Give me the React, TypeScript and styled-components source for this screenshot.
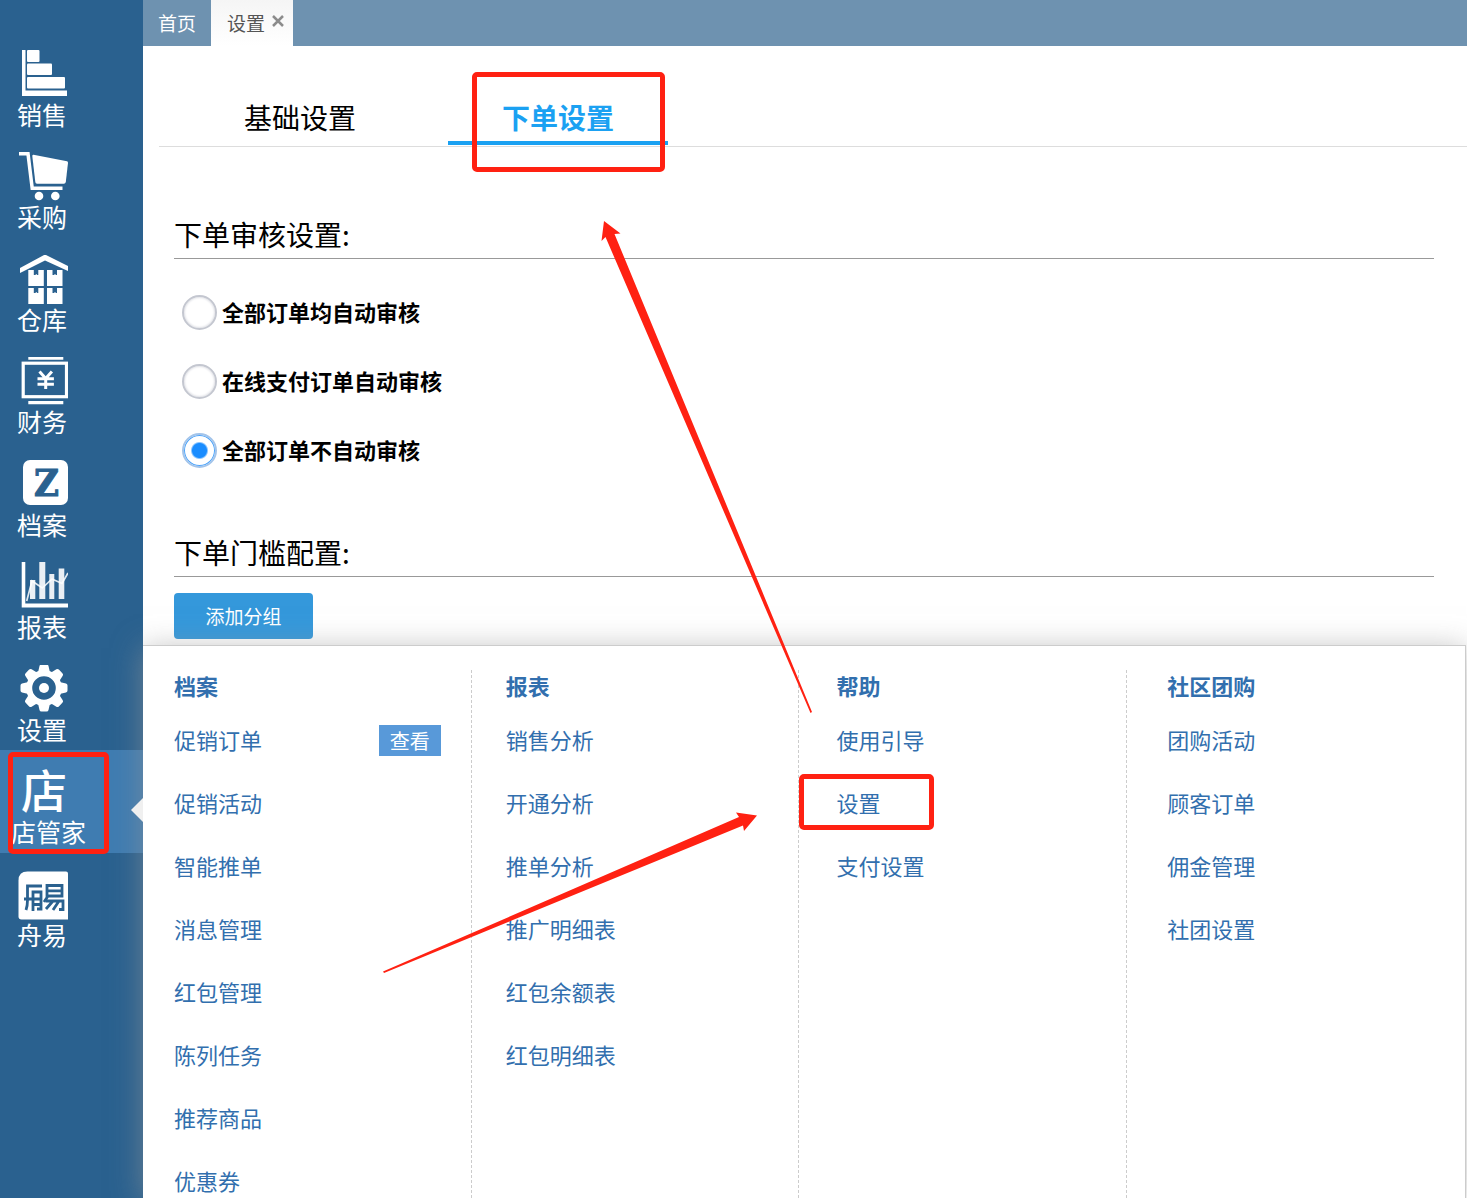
import React, { useState } from "react";
import styled, { createGlobalStyle, css } from "styled-components";

const RED = "#ff2112";

const GlobalStyle = createGlobalStyle`
  *, *::before, *::after { box-sizing: border-box; }
  body {
    margin: 0;
    background: #fff;
    font-family: "Noto Sans CJK SC", "Microsoft YaHei", sans-serif;
    color: #000;
  }
  button, input { font-family: inherit; }
  button { border: 0; padding: 0; background: none; cursor: pointer; }
  ul, h2, h3, fieldset { margin: 0; padding: 0; border: 0; font-weight: 400; }
  ul { list-style: none; }
  a { text-decoration: none; color: inherit; }
`;

const Page = styled.div`
  position: relative;
  display: flex;
  height: 100vh;
  overflow: hidden;
`;

const Sidebar = styled.nav`
  flex: none;
  width: 143px;
  padding-top: 33px;
  background: #2a618f;
`;

const SideList = styled.ul`
  display: grid;
  grid-template-rows: repeat(9, 1fr);
  height: 922px;
`;

const SideItem = styled.li<{ $active?: boolean }>`
  position: relative;
  ${(p) =>
    p.$active &&
    css`
      background: #3f7cb1;
      &::after {
        content: "";
        position: absolute;
        z-index: 2;
        right: 0;
        top: 48px;
        border: 12px solid transparent;
        border-left-width: 0;
        border-right-color: #f0f0f0;
      }
    `}
`;

const SideLink = styled.a<{ $long?: boolean }>`
  display: flex;
  flex-direction: column;
  height: 100%;
  padding: 17px 0 0 ${(p) => (p.$long ? 11 : 17)}px;
  color: #fff;
  font-size: 25px;
  line-height: 28px;
  white-space: nowrap;
`;

const SideIcon = styled.svg<{ $long?: boolean }>`
  display: block;
  flex: none;
  width: 50px;
  height: 50px;
  margin-left: ${(p) => (p.$long ? 7 : 1)}px;
  fill: #fff;
`;

const Main = styled.main`
  flex: 1;
  min-width: 0;
  display: flex;
  flex-direction: column;
`;

const TopBar = styled.header`
  display: flex;
  flex: none;
  height: 46px;
  background: #6e92b0;
`;

const PageTab = styled.div<{ $active?: boolean }>`
  display: flex;
  align-items: center;
  gap: 6px;
  padding: 0 ${(p) => (p.$active ? "8px 0 16px" : "15px")};
  background: ${(p) => (p.$active ? "linear-gradient(#f5f5f5, #fff)" : "transparent")};
  color: ${(p) => (p.$active ? "#555" : "#fff")};
`;

const TabName = styled.button`
  color: inherit;
  font-size: 19px;
  line-height: 46px;
`;

const CloseButton = styled.button`
  display: flex;
  padding-bottom: 4px;
  svg { width: 14px; height: 14px; stroke: #8c8c8c; stroke-width: 2.5; }
`;

const Settings = styled.div`
  flex: none;
  padding: 30px 0 6px 16px;
`;

const SettingTabs = styled.div`
  display: flex;
  gap: 38px;
  padding-left: 31px;
  border-bottom: 1px solid #ddd;
`;

const SettingTab = styled.button<{ $active: boolean }>`
  width: 220px;
  height: 69px;
  padding-top: 16px;
  border-bottom: 4px solid ${(p) => (p.$active ? "#1ba1f2" : "transparent")};
  margin-bottom: 1px;
  color: ${(p) => (p.$active ? "#1ba1f2" : "#000")};
  font-size: 28px;
  font-weight: ${(p) => (p.$active ? 700 : 400)};
  line-height: 40px;
`;

const Section = styled.section`
  padding: 65px 33px 0 15px;
`;

const SectionTitle = styled.h2`
  height: 47px;
  border-bottom: 1px solid #999;
  font-size: 28px;
  line-height: 44px;
`;

const Choices = styled.fieldset`
  display: grid;
  grid-auto-rows: 69px;
  padding: 19px 0 0 8px;
  height: 206px;
`;

const Choice = styled.label`
  display: flex;
  align-items: center;
  gap: 5px;
  font-size: 22px;
  font-weight: 700;
  span { padding-bottom: 4px; }
`;

const Radio = styled.input`
  appearance: none;
  width: 35px;
  height: 35px;
  margin: 0;
  border: 2px solid #c4c7d0;
  border-radius: 50%;
  background: #fff;
  box-shadow: inset 0 0 2px 1px #e2e3e8;
  &:checked {
    border-color: #a3c4ea;
    background: radial-gradient(circle, #1b8dff 7px, #fff 9px);
    box-shadow: inset 0 0 0 1px #4aa3fb;
  }
`;

const PrimaryButton = styled.button`
  display: block;
  width: 139px;
  height: 46px;
  margin-top: 16px;
  padding-bottom: 2px;
  border-radius: 4px;
  background: #3498db;
  color: #fff;
  font-size: 19px;
`;

const MegaMenu = styled.div`
  position: relative;
  z-index: 1;
  flex: 1;
  min-height: 0;
  display: grid;
  grid-template-columns: repeat(3, 655fr) 677fr;
  margin-right: 1px;
  padding-top: 24px;
  border: 1px solid #ccc;
  border-width: 1px 1px 0 0;
  background: #fff;
  box-shadow: 0 3px 28px rgba(150, 150, 150, 0.6);
`;

const MenuColumn = styled.section<{ $inset: number }>`
  padding-left: ${(p) => p.$inset}px;
  color: #326fae;
  & + & { border-left: 1px dashed #ccc; }
`;

const MenuTitle = styled.h3`
  margin-bottom: 9px;
  font-size: 22px;
  font-weight: 700;
  line-height: 30px;
`;

const MenuRow = styled.li`
  display: flex;
  align-items: center;
  justify-content: space-between;
  height: 63px;
  padding-right: 30px;
  font-size: 22px;
  a { padding-bottom: 4px; }
`;

const ViewButton = styled.button`
  width: 62px;
  height: 31px;
  background: #5899d9;
  color: #fff;
  font-size: 20px;
  line-height: 31px;
`;

const Marks = styled.svg`
  position: absolute;
  z-index: 3;
  top: 0;
  left: 0;
  width: 1467px;
  height: 1198px;
  pointer-events: none;
`;

const gearTeeth = [0, 45, 90, 135, 180, 225, 270, 315];

const icons: Record<string, React.ReactNode> = {
  销售: (
    <>
      <path d="M4 0h3.5v40.500H49V46H4z" />
      <rect x="9" y="0" width="12.5" height="12" rx="1" />
      <rect x="9" y="13.5" width="25" height="11.5" rx="1" />
      <rect x="9" y="27" width="38" height="11.5" rx="1" />
    </>
  ),
  采购: (
    <>
      <path d="M1 1.800h9L14.200 36.300H44.500" fill="none" stroke="#fff" strokeWidth="3.500" />
      <path d="M15.500 2.800L49 9.200q1 .3 1 1.500L47.800 30q-.3 1.700-2 1.700H19q-1.500 0-1.700-1.700L14.300 4q0-1.300 1.200-1.200z" />
      <circle cx="21" cy="44" r="4.300" />
      <circle cx="37.300" cy="44" r="4.300" />
    </>
  ),
  仓库: (
    <>
      <path d="M27-.5L51 11.500v5L27 5.500 2 18v-5z" />
      {[[10.3, 15], [29, 15], [10.3, 33], [29, 33]].map(([x, y]) => (
        <path key={`${x}-${y}`} d={`M${x} ${y}h5.500v5h1.500l1-1 1 1h1V${y}h5.500v16h-15.500z`} />
      ))}
    </>
  ),
  财务: (
    <>
      <path d="M10.300 0h35v2.700h-35zM10.300 44h35v3.200h-35z" />
      <rect x="5.200" y="6.200" width="43.300" height="33.500" fill="none" stroke="#fff" strokeWidth="3.200" />
      <path d="M21.500 14.500l6.200 7 6.200-7M27.700 21v11M19.500 21.800h16.400M19.500 27.300h16.400" fill="none" stroke="#fff" strokeWidth="3" />
    </>
  ),
  档案: (
    <>
      <rect x="5" y="0" width="45" height="45" rx="7" />
      <text x="28.500" y="36" textAnchor="middle" fill="#2a618f" stroke="#2a618f" fontFamily="'DejaVu Serif Condensed', 'DejaVu Serif', serif" fontWeight="700" fontSize="38">Z</text>
    </>
  ),
  报表: (
    <>
      <path d="M3.700 0h3.600v41.500H50v4H3.700z" />
      <path d="M12 18h5.300v19H12zM21.300 0h6v37h-6zM31.300 12h5v25h-5zM40.700 6.500h5.600V37h-5.600z" opacity=".9" />
      <path d="M8.700 39L14 19l10.300 7L34 17l10 4.500L50 11" fill="none" stroke="#fff" strokeWidth="1.700" opacity=".85" />
    </>
  ),
  设置: (
    <>
      <circle cx="26" cy="23" r="14.800" fill="none" stroke="#fff" strokeWidth="6" />
      <circle cx="26" cy="23" r="5" />
      {gearTeeth.map((angle) => (
        <path key={angle} d="M20 7.500l1.500-6.500q.3-1.500 2-1.500h5q1.700 0 2 1.500L32 7.500z" transform={`rotate(${angle} 26 23)`} />
      ))}
    </>
  ),
  店管家: <text x="26" y="41" textAnchor="middle" fontSize="46" fontWeight="500">店</text>,
  舟易: (
    <>
      <path d="M9.500 1.500H48q2 0 2 2v46H3.500q-3 0-3-3v-36q0-9 9-9z" />
      <g fill="none" stroke="#2a618f" strokeWidth="2.800">
        <path d="M24 16H9.500v14q0 6-1.500 10M15 41V22h8v17h-4M6 29h18M15 34.500h8" />
        <path d="M29 15.500h15v10.500H29zM29 20.800h15M30 26l-4 6M28 31h17v8.500h-4M35 31l-7 8M41 31l-6 9" />
      </g>
    </>
  ),
};

const menu = [
  { title: "档案", inset: 31, items: ["促销订单", "促销活动", "智能推单", "消息管理", "红包管理", "陈列任务", "推荐商品", "优惠券"] },
  { title: "报表", inset: 34, items: ["销售分析", "开通分析", "推单分析", "推广明细表", "红包余额表", "红包明细表"] },
  { title: "帮助", inset: 37, items: ["使用引导", "设置", "支付设置"] },
  { title: "社区团购", inset: 40, items: ["团购活动", "顾客订单", "佣金管理", "社团设置"] },
];

const settingTabs = ["基础设置", "下单设置"];
const auditModes = ["全部订单均自动审核", "在线支付订单自动审核", "全部订单不自动审核"];

export default function App() {
  const [tab, setTab] = useState("下单设置");
  const [mode, setMode] = useState(auditModes[2]);

  return (
    <>
      <GlobalStyle />
      <Page>
        <Sidebar>
          <SideList>
            {Object.keys(icons).map((name) => {
              const long = name.length > 2;
              return (
                <SideItem key={name} $active={name === "店管家"}>
                  <SideLink href="#" $long={long}>
                    <SideIcon viewBox="0 0 50 50" $long={long} aria-hidden="true">{icons[name]}</SideIcon>
                    {name}
                  </SideLink>
                </SideItem>
              );
            })}
          </SideList>
        </Sidebar>
        <Main>
          <TopBar>
            <PageTab><TabName>首页</TabName></PageTab>
            <PageTab $active>
              <TabName>设置</TabName>
              <CloseButton aria-label="关闭">
                <svg viewBox="0 0 14 14"><path d="M2 2l10 10M12 2L2 12" /></svg>
              </CloseButton>
            </PageTab>
          </TopBar>
          <Settings>
            <SettingTabs>
              {settingTabs.map((name) => (
                <SettingTab key={name} $active={tab === name} onClick={() => setTab(name)}>{name}</SettingTab>
              ))}
            </SettingTabs>
            <Section>
              <SectionTitle>下单审核设置:</SectionTitle>
              <Choices>
                {auditModes.map((name) => (
                  <Choice key={name}>
                    <Radio type="radio" name="audit" checked={mode === name} onChange={() => setMode(name)} />
                    <span>{name}</span>
                  </Choice>
                ))}
              </Choices>
            </Section>
            <Section>
              <SectionTitle>下单门槛配置:</SectionTitle>
              <PrimaryButton>添加分组</PrimaryButton>
            </Section>
          </Settings>
          <MegaMenu>
            {menu.map((column) => (
              <MenuColumn key={column.title} $inset={column.inset}>
                <MenuTitle>{column.title}</MenuTitle>
                <ul>
                  {column.items.map((item) => (
                    <MenuRow key={item}>
                      <a href="#">{item}</a>
                      {item === "促销订单" && <ViewButton>查看</ViewButton>}
                    </MenuRow>
                  ))}
                </ul>
              </MenuColumn>
            ))}
          </MegaMenu>
        </Main>
        <Marks viewBox="0 0 1467 1198" aria-hidden="true">
          <g fill="none" stroke={RED} strokeWidth="5">
            <rect x="474.500" y="74.500" width="188" height="95" rx="2.500" />
            <rect x="801.500" y="776.500" width="130" height="51" rx="2.500" />
            <rect x="10.500" y="754.500" width="96" height="97" rx="2.500" />
          </g>
          <g fill={RED}>
            <path d="M604 221l16.500 12.500-6 .5L812 712l-1.500 1L605.500 237l-4 4z" />
            <path d="M757 815.500l-13 15.500-1-5.500L384 973l-1-1.500L739 817l-3-4.500z" />
          </g>
        </Marks>
      </Page>
    </>
  );
}
